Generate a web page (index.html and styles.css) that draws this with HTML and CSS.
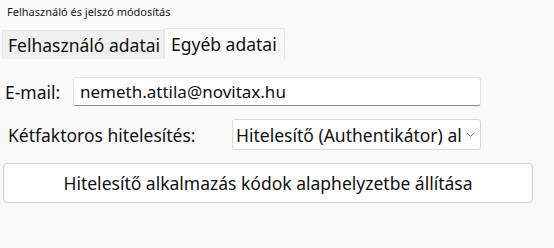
FILE: index.html
```html
<!DOCTYPE html>
<html lang="hu">
<head>
<meta charset="utf-8">
<link rel="stylesheet" href="styles.css">
</head>
<body>
<div class="window">
  <div class="title">Felhasználó és jelszó módosítás</div>
  <div class="tabs">
    <div class="tab first">Felhasználó adatai</div>
    <div class="tab active">Egyéb adatai</div>
  </div>
  <div class="panel">
    <div class="row email-row">
      <label class="label">E-mail:</label>
      <div class="input">nemeth.attila@novitax.hu</div>
    </div>
    <div class="row twofa-row">
      <label class="label">Kétfaktoros hitelesítés:</label>
      <div class="select">
        <span class="select-text">Hitelesítő (Authentikátor) al</span>
        <svg class="chev" width="9" height="6" viewBox="0 0 9 6"><path d="M1 1 L4.5 4.5 L8 1" fill="none" stroke="#777" stroke-width="1"/></svg>
      </div>
    </div>
    <button class="btn">Hitelesítő alkalmazás kódok alaphelyzetbe állítása</button>
  </div>
</div>
</body>
</html>
```
FILE: styles.css
```css
html, body {
  margin: 0;
  padding: 0;
  background: #f9f9f9;
}
.window {
  width: 554px;
  height: 248px;
  font-family: "Noto Sans", "Open Sans", sans-serif;
  color: #111;
}
.title {
  height: 26px;
  padding-left: 7px;
  font-size: 11px;
  line-height: 24px;
  color: #1a1a1a;
}
.tabs {
  display: flex;
  align-items: flex-end;
  height: 33px;
  padding-left: 2px;
}
.tab {
  height: 29px;
  box-sizing: border-box;
  padding: 0 5px;
  font-size: 17.5px;
  line-height: 28px;
  background: #f0f0f0;
  border: 1px solid #e6e6e6;
  border-bottom: none;
  white-space: nowrap;
}
.tab.first {
  width: 162px;
}
.tab.active {
  width: 121px;
  height: 31px;
  background: #fafafa;
  line-height: 30px;
  padding-left: 6px;
}
.panel {
  padding: 18px 21px 0 3px;
  display: flex;
  flex-direction: column;
}
.row {
  display: flex;
  align-items: center;
  font-size: 17.5px;
}
.email-row .label {
  padding-left: 2px;
  width: 68px;
}
.input {
  width: 408px;
  height: 29px;
  box-sizing: border-box;
  background: #fff;
  border: 1px solid #e4e4e4;
  border-bottom-color: #8a8a8a;
  border-radius: 3px;
  padding-left: 6px;
  line-height: 27px;
  font-size: 17px;
}
.twofa-row {
  margin-top: 13px;
}
.twofa-row .label {
  padding-left: 5px;
  width: 224px;
}
.select {
  display: flex;
  align-items: center;
  width: 249px;
  height: 31px;
  box-sizing: border-box;
  background: #fff;
  border: 1px solid #d8d8d8;
  border-radius: 3px;
  padding-left: 3px;
  overflow: hidden;
}
.select-text {
  flex: 1;
  white-space: nowrap;
  overflow: hidden;
}
.chev {
  margin: 0 5px 0 4px;
}
.btn {
  margin-top: 13px;
  width: 530px;
  height: 40px;
  background: #fff;
  border: 1px solid #d0d0d0;
  border-radius: 4px;
  font-family: "Noto Sans", "Open Sans", sans-serif;
  font-size: 17.5px;
  color: #111;
  padding: 0;
}
```
